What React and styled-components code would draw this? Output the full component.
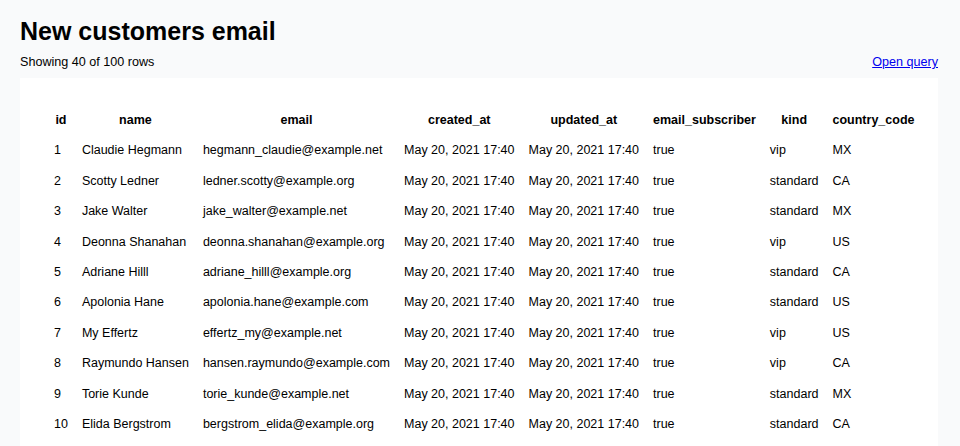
import React from "react";
import styled, { createGlobalStyle } from "styled-components";

const GlobalStyle = createGlobalStyle`
  body {
    margin: 0;
    background: #f9fafb;
    font-family: "Liberation Sans", Arial, Helvetica, sans-serif;
    color: #000;
  }
`;

const Page = styled.div`
  padding: 17px 22px 0 20px;
`;

const Title = styled.h1`
  margin: 0;
  font-size: 25px;
  line-height: 28px;
  font-weight: bold;
`;

const Toolbar = styled.div`
  display: flex;
  justify-content: space-between;
  align-items: baseline;
  margin-top: 10px;
  font-size: 12.6px;
  line-height: 15px;
`;

const QueryLink = styled.a`
  color: #0000ee;
  text-decoration: underline;
`;

const Card = styled.div`
  margin-top: 8px;
  background: #fff;
  padding: 27px 20px 26px 27px;
`;

const Table = styled.table`
  border-collapse: collapse;
  font-size: 12.5px;
  line-height: 16.4px;
`;

const Th = styled.th`
  padding: 7px;
  font-weight: bold;
  text-align: center;
  white-space: nowrap;
`;

const Td = styled.td`
  padding: 7px;
  text-align: left;
  white-space: nowrap;
`;

const columns = [
  "id",
  "name",
  "email",
  "created_at",
  "updated_at",
  "email_subscriber",
  "kind",
  "country_code"
];

const stamp = "May 20, 2021 17:40";

const rows = [
  [1, "Claudie Hegmann", "hegmann_claudie@example.net", "vip", "MX"],
  [2, "Scotty Ledner", "ledner.scotty@example.org", "standard", "CA"],
  [3, "Jake Walter", "jake_walter@example.net", "standard", "MX"],
  [4, "Deonna Shanahan", "deonna.shanahan@example.org", "vip", "US"],
  [5, "Adriane Hilll", "adriane_hilll@example.org", "standard", "CA"],
  [6, "Apolonia Hane", "apolonia.hane@example.com", "standard", "US"],
  [7, "My Effertz", "effertz_my@example.net", "vip", "US"],
  [8, "Raymundo Hansen", "hansen.raymundo@example.com", "vip", "CA"],
  [9, "Torie Kunde", "torie_kunde@example.net", "standard", "MX"],
  [10, "Elida Bergstrom", "bergstrom_elida@example.org", "standard", "CA"]
];

export default function App() {
  return (
    <Page>
      <GlobalStyle />
      <Title>New customers email</Title>
      <Toolbar>
        <span>Showing 40 of 100 rows</span>
        <QueryLink href="#">Open query</QueryLink>
      </Toolbar>
      <Card>
        <Table>
          <thead>
            <tr>
              {columns.map(c => (
                <Th key={c}>{c}</Th>
              ))}
            </tr>
          </thead>
          <tbody>
            {rows.map(([id, name, email, kind, country]) => (
              <tr key={id}>
                <Td>{id}</Td>
                <Td>{name}</Td>
                <Td>{email}</Td>
                <Td>{stamp}</Td>
                <Td>{stamp}</Td>
                <Td>true</Td>
                <Td>{kind}</Td>
                <Td>{country}</Td>
              </tr>
            ))}
          </tbody>
        </Table>
      </Card>
    </Page>
  );
}
